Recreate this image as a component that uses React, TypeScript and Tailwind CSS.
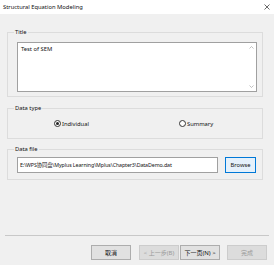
import React from "react";

const font = { fontFamily: '"Noto Sans", "Noto Sans CJK SC", sans-serif' };

function Radio({ checked }: { checked?: boolean }) {
  return (
    <span className="flex h-[7px] w-[7px] items-center justify-center rounded-full border border-[#333] bg-white">
      {checked && <span className="h-[3px] w-[3px] rounded-full bg-[#222]" />}
    </span>
  );
}

function Btn({ children, disabled }: { children: React.ReactNode; disabled?: boolean }) {
  return (
    <div
      className={`flex h-[15px] w-[40px] items-center justify-center border text-[6px] ${
        disabled ? "border-[#cccccc] bg-[#dcdcdc] text-[#9a9a9a]" : "border-[#adadad] bg-[#e1e1e1] text-[#111]"
      }`}
    >
      {children}
    </div>
  );
}

export default function App() {
  return (
    <div className="flex h-[265px] w-[274px] flex-col bg-[#f0f0f0] text-[5.8px] leading-[8px] text-[#111]" style={font}>
      <div className="flex h-[14px] items-center justify-between bg-white pl-[3px] pr-[4px]">
        <span>Structural Equation Modeling</span>
        <svg width="6" height="6" viewBox="0 0 6 6">
          <path d="M0.5 0.5 L5.5 5.5 M5.5 0.5 L0.5 5.5" stroke="#444" strokeWidth="0.8" />
        </svg>
      </div>

      <div className="flex flex-1 flex-col pl-[7px] pt-[14px]">
        <fieldset className="h-[69px] w-[256px] border border-[#dcdcdc]">
          <legend className="ml-[6px] px-[1px]">Title</legend>
          <div className="ml-[9px] mt-[6px] flex h-[50px] w-[240px] border border-[#a0a0a0] bg-white">
            <div className="flex-1 pl-[3px] pt-[2px]">Test of SEM</div>
            <div className="flex w-[9px] flex-col items-center justify-between py-[3px]">
              <svg width="5" height="3" viewBox="0 0 5 3">
                <path d="M0.5 2.5 L2.5 0.5 L4.5 2.5" fill="none" stroke="#a8a8a8" strokeWidth="0.7" />
              </svg>
              <svg width="5" height="3" viewBox="0 0 5 3">
                <path d="M0.5 0.5 L2.5 2.5 L4.5 0.5" fill="none" stroke="#a8a8a8" strokeWidth="0.7" />
              </svg>
            </div>
          </div>
        </fieldset>

        <fieldset className="mt-[7px] h-[35px] w-[256px] border border-[#dcdcdc]">
          <legend className="ml-[6px] px-[1px]">Data type</legend>
          <div className="flex h-[23px] items-center">
            <div className="ml-[46px] flex items-center gap-[1px]">
              <Radio checked />
              <span>Individual</span>
            </div>
            <div className="ml-[90px] flex items-center gap-[1px]">
              <Radio />
              <span>Summary</span>
            </div>
          </div>
        </fieldset>

        <fieldset className="mt-[6px] h-[35px] w-[256px] border border-[#dcdcdc]">
          <legend className="ml-[6px] px-[1px]">Data file</legend>
          <div className="ml-[9px] mt-[4px] flex items-center">
            <div className="flex h-[16px] w-[201px] items-center overflow-hidden whitespace-nowrap border border-[#a0a0a0] bg-white pl-[2px] text-[5.3px] tracking-[-0.1px]">
              E:\WPS协同盘\Myplus Learning\Mplus\Chapter3\DataDemo.dat
            </div>
            <div className="ml-[7px] flex h-[16px] w-[31px] items-center justify-center border border-[#0078d7] bg-[#e5f1fb]">
              Browse
            </div>
          </div>
        </fieldset>
      </div>

      <div className="mx-[5px] h-[2px] border-t border-[#c8c8c8] border-b-white" />
      <div className="flex items-center justify-end pb-[5px] pr-[7px] pt-[8px]">
        <Btn>取消</Btn>
        <div className="ml-[8px] flex gap-[1px]">
          <Btn disabled>&lt; 上一步(B)</Btn>
          <Btn>下一页(N) &gt;</Btn>
        </div>
        <div className="ml-[7px]">
          <Btn disabled>完成</Btn>
        </div>
      </div>
    </div>
  );
}
